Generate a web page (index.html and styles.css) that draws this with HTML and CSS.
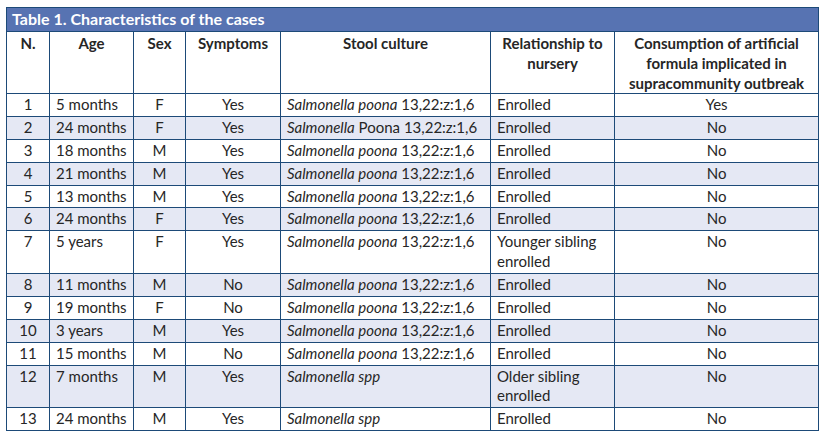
FILE: index.html
```html
<!DOCTYPE html>
<html lang="en">
<head>
<meta charset="utf-8">
<title>Table 1. Characteristics of the cases</title>
<link rel="stylesheet" href="styles.css">
</head>
<body>
<table class="cases">
  <colgroup>
    <col class="c-n"><col class="c-age"><col class="c-sex"><col class="c-sym"><col class="c-stool"><col class="c-rel"><col class="c-cons">
  </colgroup>
  <thead>
    <tr><th class="title" colspan="7">Table 1. Characteristics of the cases</th></tr>
    <tr class="head">
      <th>N.</th><th>Age</th><th>Sex</th><th>Symptoms</th><th>Stool culture</th><th>Relationship to nursery</th><th>Consumption of artificial formula implicated in supracommunity outbreak</th>
    </tr>
  </thead>
  <tbody>
    <tr><td class="ctr">1</td><td>5 months</td><td class="ctr">F</td><td class="ctr">Yes</td><td><i>Salmonella poona</i> 13,22:z:1,6</td><td>Enrolled</td><td class="ctr">Yes</td></tr>
    <tr class="alt"><td class="ctr">2</td><td>24 months</td><td class="ctr">F</td><td class="ctr">Yes</td><td><i>Salmonella</i> Poona 13,22:z:1,6</td><td>Enrolled</td><td class="ctr">No</td></tr>
    <tr><td class="ctr">3</td><td>18 months</td><td class="ctr">M</td><td class="ctr">Yes</td><td><i>Salmonella poona</i> 13,22:z:1,6</td><td>Enrolled</td><td class="ctr">No</td></tr>
    <tr class="alt"><td class="ctr">4</td><td>21 months</td><td class="ctr">M</td><td class="ctr">Yes</td><td><i>Salmonella poona</i> 13,22:z:1,6</td><td>Enrolled</td><td class="ctr">No</td></tr>
    <tr><td class="ctr">5</td><td>13 months</td><td class="ctr">M</td><td class="ctr">Yes</td><td><i>Salmonella poona</i> 13,22:z:1,6</td><td>Enrolled</td><td class="ctr">No</td></tr>
    <tr class="alt"><td class="ctr">6</td><td>24 months</td><td class="ctr">F</td><td class="ctr">Yes</td><td><i>Salmonella poona</i> 13,22:z:1,6</td><td>Enrolled</td><td class="ctr">No</td></tr>
    <tr><td class="ctr">7</td><td>5 years</td><td class="ctr">F</td><td class="ctr">Yes</td><td><i>Salmonella poona</i> 13,22:z:1,6</td><td>Younger sibling<br>enrolled</td><td class="ctr">No</td></tr>
    <tr class="alt"><td class="ctr">8</td><td>11 months</td><td class="ctr">M</td><td class="ctr">No</td><td><i>Salmonella poona</i> 13,22:z:1,6</td><td>Enrolled</td><td class="ctr">No</td></tr>
    <tr><td class="ctr">9</td><td>19 months</td><td class="ctr">F</td><td class="ctr">No</td><td><i>Salmonella poona</i> 13,22:z:1,6</td><td>Enrolled</td><td class="ctr">No</td></tr>
    <tr class="alt"><td class="ctr">10</td><td>3 years</td><td class="ctr">M</td><td class="ctr">Yes</td><td><i>Salmonella poona</i> 13,22:z:1,6</td><td>Enrolled</td><td class="ctr">No</td></tr>
    <tr><td class="ctr">11</td><td>15 months</td><td class="ctr">M</td><td class="ctr">No</td><td><i>Salmonella poona</i> 13,22:z:1,6</td><td>Enrolled</td><td class="ctr">No</td></tr>
    <tr class="alt"><td class="ctr">12</td><td>7 months</td><td class="ctr">M</td><td class="ctr">Yes</td><td><i>Salmonella spp</i></td><td>Older sibling<br>enrolled</td><td class="ctr">No</td></tr>
    <tr><td class="ctr">13</td><td>24 months</td><td class="ctr">M</td><td class="ctr">Yes</td><td><i>Salmonella spp</i></td><td>Enrolled</td><td class="ctr">No</td></tr>
  </tbody>
</table>
</body>
</html>
```

FILE: styles.css
```css
html, body {
  margin: 0;
  padding: 0;
  background: #ffffff;
}

body {
  padding: 7px 0 0 6px;
  font-family: Lato, "Open Sans", sans-serif;
  font-size: 15px;
  color: #262626;
}

.cases {
  border-collapse: collapse;
  table-layout: fixed;
  width: 812px;
}

.c-n { width: 43px; }
.c-age { width: 84px; }
.c-sex { width: 52px; }
.c-sym { width: 95px; }
.c-stool { width: 210px; }
.c-rel { width: 124px; }
.c-cons { width: 204px; }

.cases th,
.cases td {
  border: 1px solid #1d4a78;
  padding: 1px 6px;
  line-height: 19.87px;
  vertical-align: top;
  text-align: left;
  font-weight: normal;
}

.cases th.title {
  background: #5773b2;
  color: #ffffff;
  font-weight: bold;
  font-size: 16px;
  padding: 1px 5px 2px;
  line-height: 20px;
}

.cases .head th {
  font-weight: bold;
  text-align: center;
  line-height: 20px;
  padding: 1px 4px 0;
}

.cases td.ctr {
  text-align: center;
}

.cases tr.alt td {
  background: #e5e8f4;
}

.cases i {
  font-style: italic;
}
```
